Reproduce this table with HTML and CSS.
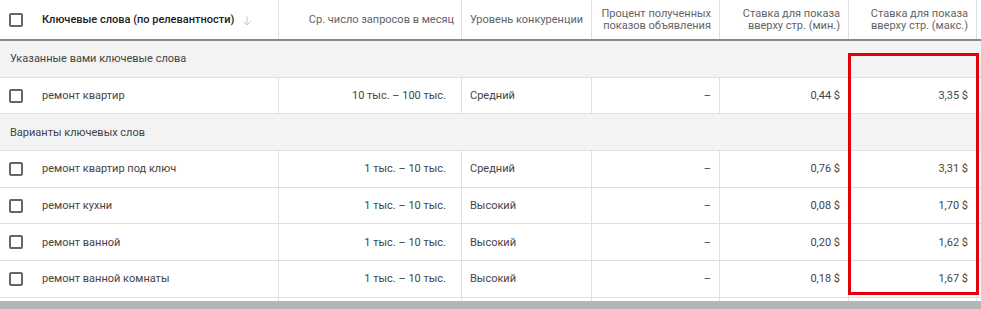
FILE: index.html
```html
<!DOCTYPE html>
<html lang="ru">
<head>
<meta charset="utf-8">
<link rel="stylesheet" href="styles.css">
</head>
<body>
<div class="grid">
  <div class="row head">
    <div class="cell c1"><span class="cb"></span><span class="kwh">Ключевые слова (по релевантности)</span><svg class="arrow" width="10" height="10" viewBox="0 0 10 10"><path d="M5 0.5V9M1.5 5.5L5 9L8.5 5.5" fill="none" stroke="#bdc1c6" stroke-width="1"/></svg></div>
    <div class="cell c2 r hp">Ср. число запросов в месяц</div>
    <div class="cell c3">Уровень конкуренции</div>
    <div class="cell c4 r">Процент полученных<br>показов объявления</div>
    <div class="cell c5 r">Ставка для показа<br>вверху стр. (мин.)</div>
    <div class="cell c6 r">Ставка для показа<br>вверху стр. (макс.)</div>
    <div class="cell c7"></div>
  </div>
  <div class="row group">Указанные вами ключевые слова</div>
  <div class="row">
    <div class="cell c1"><span class="cb"></span><span class="kw">ремонт квартир</span></div>
    <div class="cell c2 r">10 тыс. – 100 тыс.</div>
    <div class="cell c3">Средний</div>
    <div class="cell c4 r">–</div>
    <div class="cell c5 r">0,44 $</div>
    <div class="cell c6 r">3,35 $</div>
    <div class="cell c7"></div>
  </div>
  <div class="row group">Варианты ключевых слов</div>
  <div class="row">
    <div class="cell c1"><span class="cb"></span><span class="kw">ремонт квартир под ключ</span></div>
    <div class="cell c2 r">1 тыс. – 10 тыс.</div>
    <div class="cell c3">Средний</div>
    <div class="cell c4 r">–</div>
    <div class="cell c5 r">0,76 $</div>
    <div class="cell c6 r">3,31 $</div>
    <div class="cell c7"></div>
  </div>
  <div class="row">
    <div class="cell c1"><span class="cb"></span><span class="kw">ремонт кухни</span></div>
    <div class="cell c2 r">1 тыс. – 10 тыс.</div>
    <div class="cell c3">Высокий</div>
    <div class="cell c4 r">–</div>
    <div class="cell c5 r">0,08 $</div>
    <div class="cell c6 r">1,70 $</div>
    <div class="cell c7"></div>
  </div>
  <div class="row">
    <div class="cell c1"><span class="cb"></span><span class="kw">ремонт ванной</span></div>
    <div class="cell c2 r">1 тыс. – 10 тыс.</div>
    <div class="cell c3">Высокий</div>
    <div class="cell c4 r">–</div>
    <div class="cell c5 r">0,20 $</div>
    <div class="cell c6 r">1,62 $</div>
    <div class="cell c7"></div>
  </div>
  <div class="row">
    <div class="cell c1"><span class="cb"></span><span class="kw">ремонт ванной комнаты</span></div>
    <div class="cell c2 r">1 тыс. – 10 тыс.</div>
    <div class="cell c3">Высокий</div>
    <div class="cell c4 r">–</div>
    <div class="cell c5 r">0,18 $</div>
    <div class="cell c6 r">1,67 $</div>
    <div class="cell c7"></div>
  </div>
  <div class="row tail">
    <div class="cell c1"></div>
    <div class="cell c2"></div>
    <div class="cell c3"></div>
    <div class="cell c4"></div>
    <div class="cell c5"></div>
    <div class="cell c6"></div>
    <div class="cell c7"></div>
  </div>
</div>
<div class="highlight"></div>
<div class="scrollbar"></div>
</body>
</html>
```

FILE: styles.css
```css
html, body {
  margin: 0;
  padding: 0;
  background: #fff;
  overflow: hidden;
}
body {
  width: 981px;
  height: 309px;
  position: relative;
  font-family: Roboto, "Liberation Sans", Arial, sans-serif;
  font-size: 11px;
  color: #444;
}
.grid {
  display: flex;
  flex-direction: column;
  height: 309px;
  overflow: hidden;
}
.row {
  display: flex;
  height: 36.7px;
  box-sizing: border-box;
  border-bottom: 1px solid #e0e0e0;
  flex: none;
}
.row.head {
  height: 41px;
  border-bottom: 2px solid #868a8e;
  color: #5f6368;
  line-height: 12px;
}
.row.tail {
  height: 12px;
  border-bottom: none;
}
.row.group {
  background: #f3f3f3;
  align-items: center;
  padding-left: 10px;
  color: #444;
}
.cell {
  box-sizing: border-box;
  border-right: 1px solid #e0e0e0;
  display: flex;
  align-items: center;
  padding: 0 8px;
  flex: none;
  white-space: nowrap;
}
.cell.r {
  justify-content: flex-end;
  text-align: right;
}
.c1 { width: 279px; padding-left: 9px; }
.c2 { width: 183px; padding-right: 15px; }
.c2.hp { padding-right: 7px; }
.c3 { width: 130px; }
.c4 { width: 128px; }
.c5 { width: 129px; }
.c6 { width: 128px; }
.c7 { width: 40px; border-right: none; }
.cb {
  width: 14px;
  height: 14px;
  box-sizing: border-box;
  border: 2px solid #666;
  border-radius: 2px;
  margin-right: 19px;
  flex: none;
}
.kwh {
  font-weight: 500;
  color: #202124;
}
.arrow {
  margin-left: 8px;
  margin-top: 2px;
}
.highlight {
  position: absolute;
  left: 848px;
  top: 53px;
  width: 131px;
  height: 242px;
  box-sizing: border-box;
  border: 3px solid #e3000b;
}
.scrollbar {
  position: absolute;
  left: 0;
  bottom: 0;
  width: 981px;
  height: 8px;
  background: #b5b5b5;
}
```
